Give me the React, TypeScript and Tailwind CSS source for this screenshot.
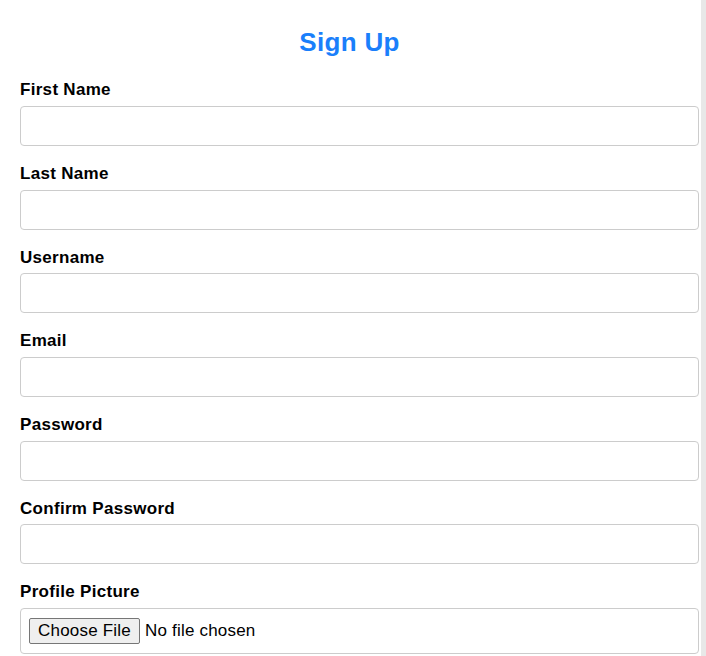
const FIELDS = [
	{ label: "First Name", type: "text" },
	{ label: "Last Name", type: "text" },
	{ label: "Username", type: "text" },
	{ label: "Email", type: "email" },
	{ label: "Password", type: "password" },
	{ label: "Confirm Password", type: "password" },
];

const LABEL = "mb-[8.67px] font-bold text-[17px] text-black leading-[15px] tracking-[0.3px]";

function Field({ label, type }: { label: string; type: string }) {
	return (
		<div className="mb-5 flex flex-col">
			<label className={LABEL}>{label}</label>
			<input
				type={type}
				className="h-10 w-full rounded-[4px] border border-[#cccccc] bg-white px-2 text-[16px] outline-none"
			/>
		</div>
	);
}

export default function App(): React.JSX.Element {
	return (
		<div className="flex h-[656px] w-[706px] overflow-hidden bg-white font-['Liberation_Sans',Arial,sans-serif]">
			<div className="w-[701px] pt-7 pr-[2px] pl-5">
				<h2 className="mb-[26.33px] pr-[20px] text-center font-bold text-[#1a7ffb] text-[26px] leading-7 tracking-[0.3px]">
					Sign Up
				</h2>
				<form>
					{FIELDS.map((f) => (
						<Field key={f.label} label={f.label} type={f.type} />
					))}
					<div className="flex flex-col">
						<label className={LABEL}>Profile Picture</label>
						<div className="flex h-[46px] w-full items-center gap-[5px] rounded-[4px] border border-[#cccccc] bg-white px-2">
							<button
								type="button"
								className="flex h-[26px] w-[111px] items-center justify-center rounded-[2px] border border-[#767676] bg-[#efefef] text-[17px] text-black tracking-[0.2px]"
							>
								Choose File
							</button>
							<span className="text-[17px] text-black tracking-[0.2px]">No file chosen</span>
						</div>
					</div>
				</form>
			</div>
			<div className="h-full w-[5px] bg-[#e8e8e8]" />
		</div>
	);
}
